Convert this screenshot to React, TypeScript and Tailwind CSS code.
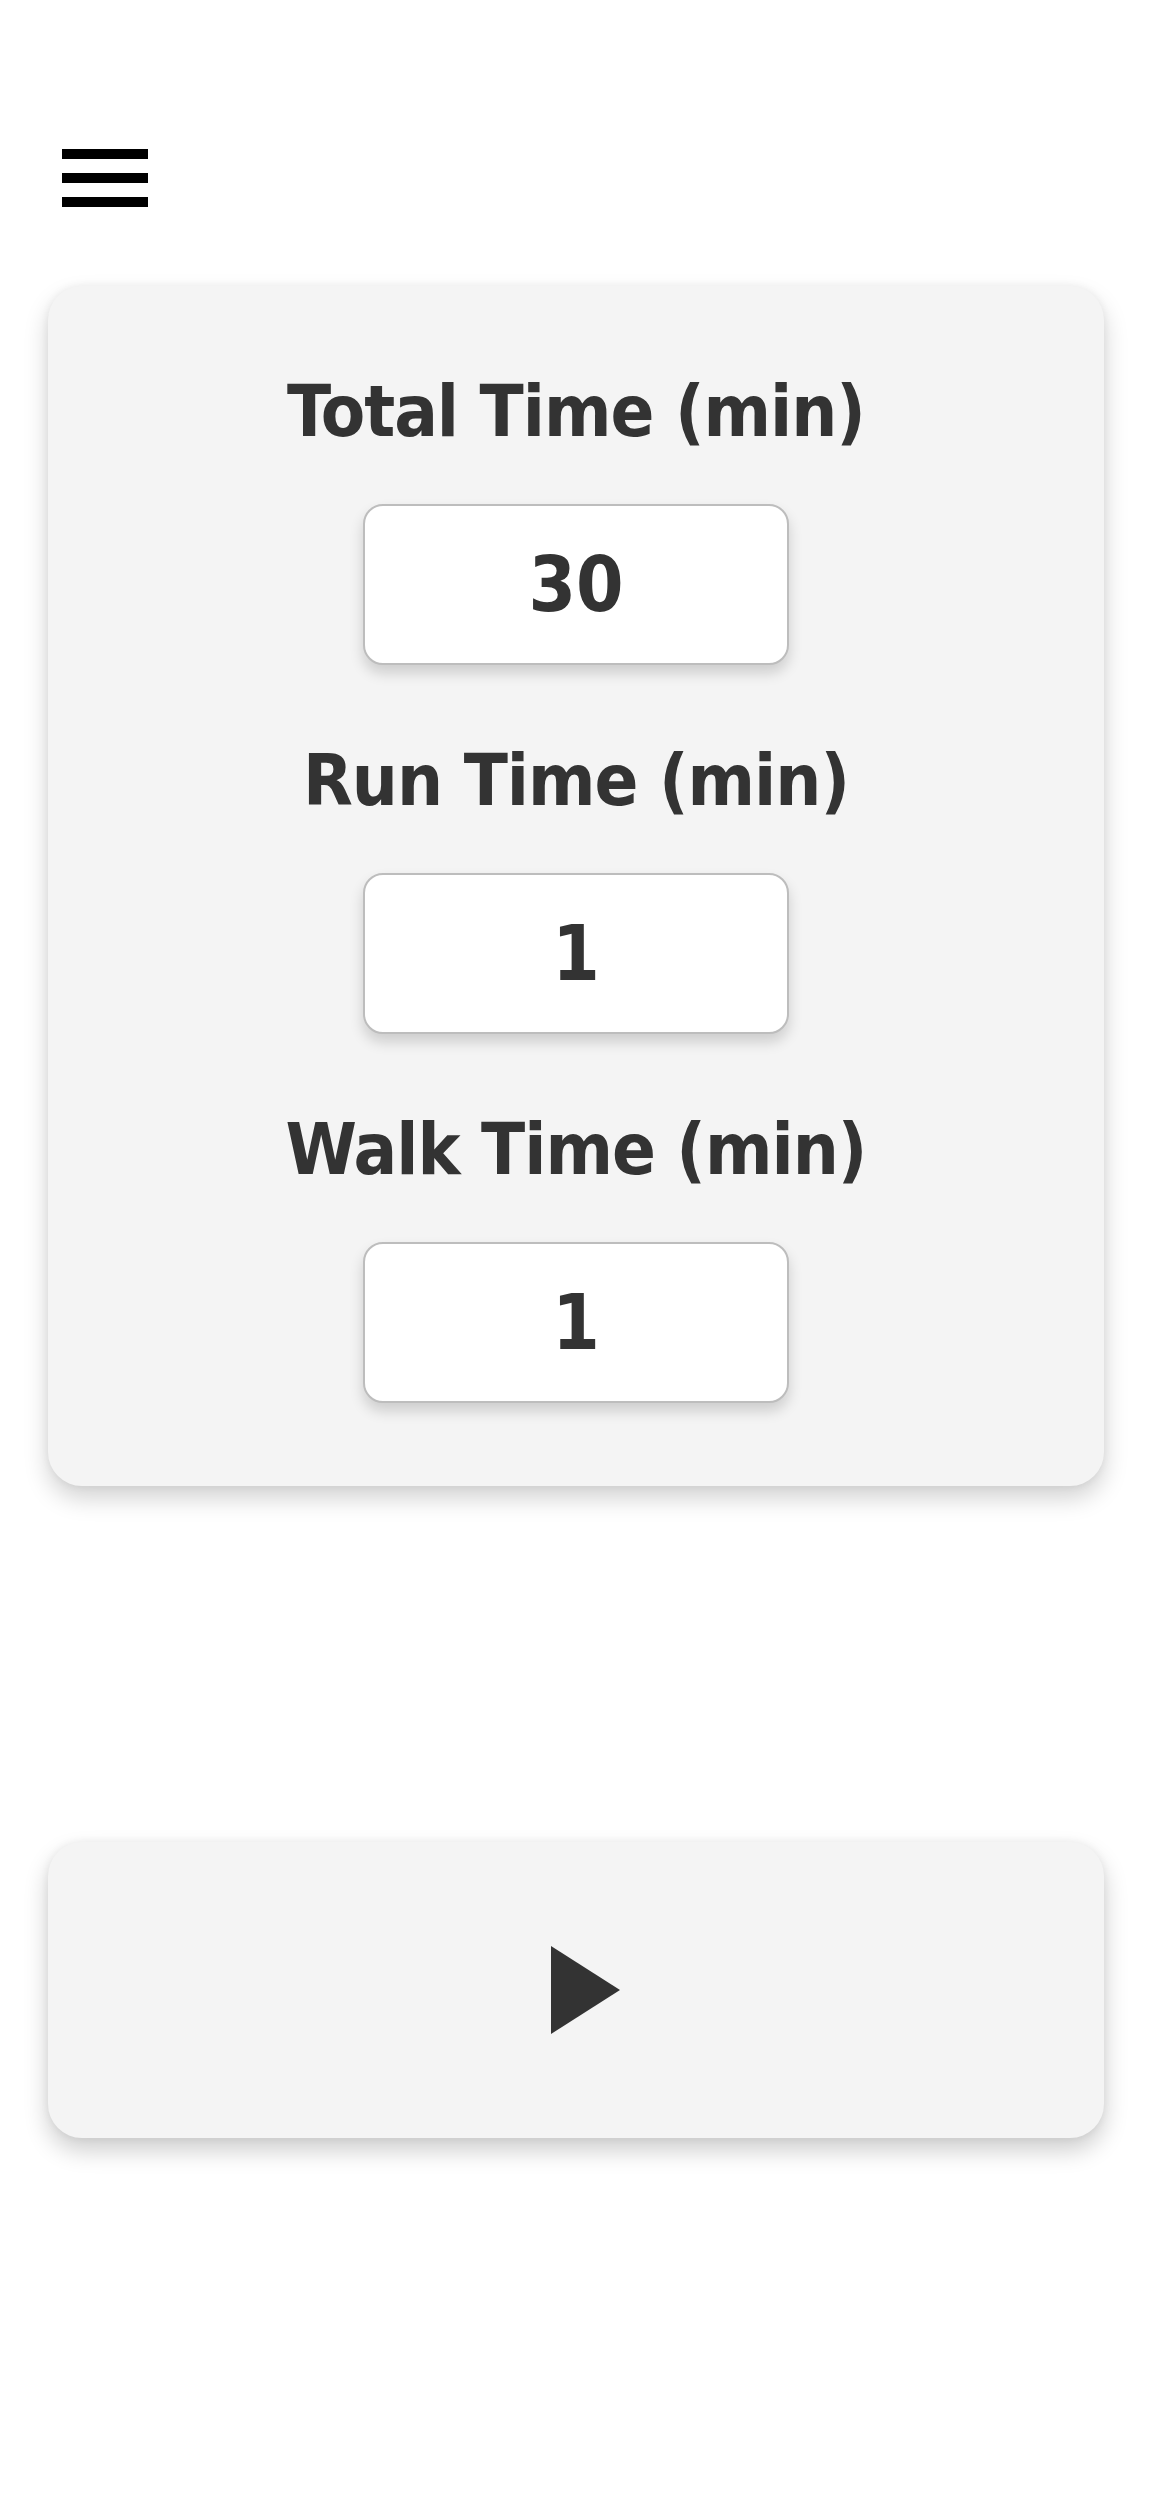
import { useState } from "react";

const fontStack = {
  fontFamily: "'DejaVu Sans Condensed', 'Liberation Sans', sans-serif",
};

type FieldProps = {
  label: string;
  value: string;
  onChange: (v: string) => void;
  first?: boolean;
};

const TimeField = ({ label, value, onChange, first }: FieldProps) => {
  return (
    <div className={`flex flex-col items-center ${first ? "" : "mt-[79px]"}`}>
      <label className="text-[72px] leading-none font-bold text-[#333] tracking-[-1px]">
        {label}
      </label>
      <input
        type="text"
        value={value}
        onChange={(e) => onChange(e.target.value)}
        className="mt-[57px] w-[426px] h-[161px] bg-white border-2 border-[#bdbdbd] rounded-[20px] text-center text-[76px] font-bold text-[#333] outline-none shadow-[0_8px_14px_rgba(0,0,0,0.16)]"
        style={fontStack}
      />
    </div>
  );
};

const App = () => {
  const [total, setTotal] = useState("30");
  const [run, setRun] = useState("1");
  const [walk, setWalk] = useState("1");

  return (
    <div className="w-full min-h-[2496px] bg-white" style={fontStack}>
      <div className="pt-[149px] pl-[62px]">
        <button className="flex flex-col gap-[14px] w-[86px]">
          <span className="block h-[10px] w-[86px] bg-black" />
          <span className="block h-[10px] w-[86px] bg-black" />
          <span className="block h-[10px] w-[86px] bg-black" />
        </button>
      </div>

      <div className="mx-[48px] mt-[79px] bg-[#f4f4f4] rounded-[34px] pt-[89px] pb-[83px] shadow-[0_12px_24px_rgba(0,0,0,0.18),0_0_8px_rgba(0,0,0,0.06)]">
        <TimeField label="Total Time (min)" value={total} onChange={setTotal} first />
        <TimeField label="Run Time (min)" value={run} onChange={setRun} />
        <TimeField label="Walk Time (min)" value={walk} onChange={setWalk} />
      </div>

      <button className="mx-[48px] mt-[356px] w-[1056px] h-[296px] bg-[#f4f4f4] rounded-[34px] flex items-center justify-center shadow-[0_12px_24px_rgba(0,0,0,0.2),0_0_8px_rgba(0,0,0,0.06)]">
        <svg width="69" height="88" viewBox="0 0 69 88" className="ml-[19px]">
          <polygon points="0,0 69,44 0,88" fill="#333" />
        </svg>
      </button>
    </div>
  );
};

export default App;
